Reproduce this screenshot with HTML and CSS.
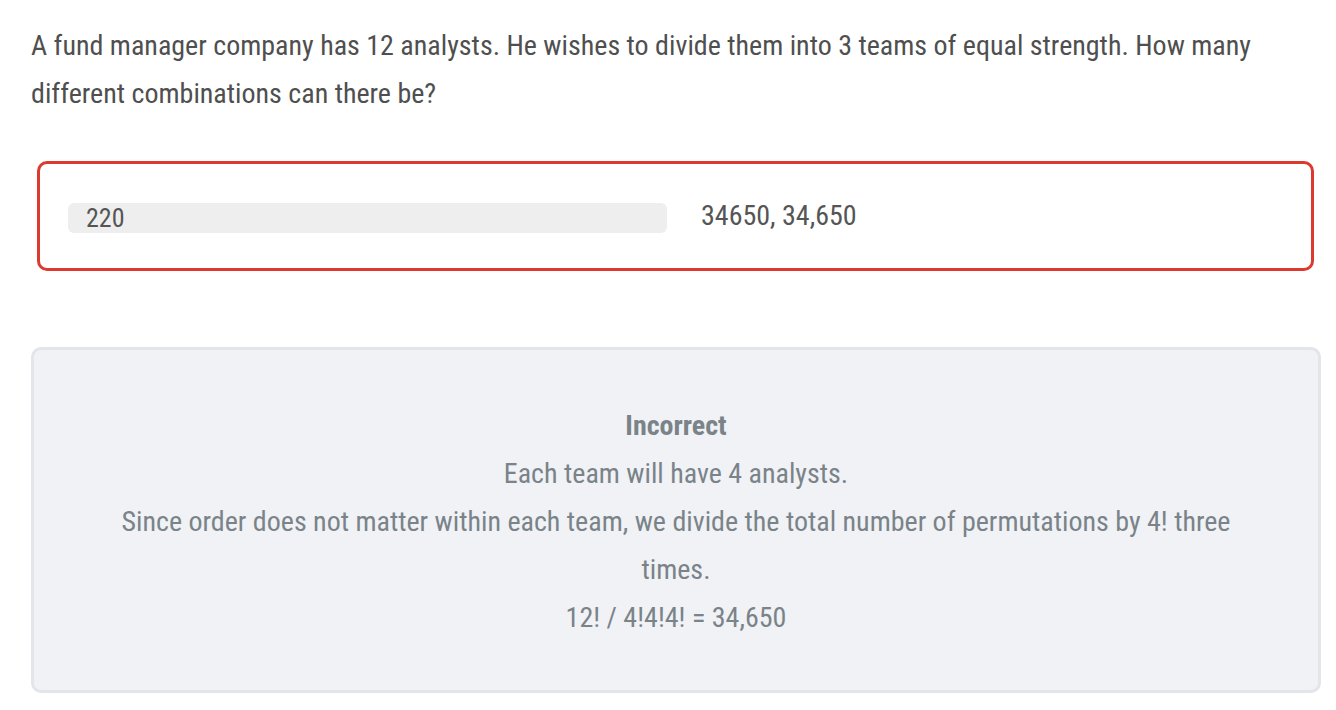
FILE: index.html
```html
<!DOCTYPE html>
<html>
<head>
<meta charset="utf-8">
<link rel="stylesheet" href="styles.css">
</head>
<body>
<div class="page">
  <p class="question">A fund manager company has 12 analysts. He wishes to divide them into 3 teams of equal strength. How many different combinations can there be?</p>
  <div class="answer-box">
    <div class="given">220</div>
    <div class="correct">34650, 34,650</div>
  </div>
  <div class="feedback">
    <div class="fb-title">Incorrect</div>
    <div>Each team will have 4 analysts.</div>
    <div>Since order does not matter within each team, we divide the total number of permutations by 4! three times.</div>
    <div>12! / 4!4!4! = 34,650</div>
  </div>
</div>
</body>
</html>
```
FILE: styles.css
```css
html, body {
  margin: 0;
  padding: 0;
  background: #ffffff;
}
body {
  font-family: "Roboto Condensed", Roboto, "Liberation Sans", sans-serif;
  font-stretch: condensed;
  font-size: 28px;
  color: #4f4f4f;
}
.page {
  padding: 22px 16px 0 31px;
  width: 1290px;
}
.question {
  margin: 0;
  line-height: 48px;
  width: 1240px;
}
.answer-box {
  margin: 43px 7px 0 6px;
  border: 3px solid #dc3a2e;
  border-radius: 10px;
  height: 110px;
  box-sizing: border-box;
  display: flex;
  align-items: center;
  padding: 4px 0 0 28px;
  gap: 34px;
}
.given {
  width: 581px;
  height: 30px;
  line-height: 30px;
  background: #eeeeee;
  border-radius: 6px;
  padding-left: 18px;
  color: #555555;
  font-size: 26px;
}
.correct {
  color: #555555;
  margin-top: -6px;
}
.feedback {
  margin-top: 76px;
  background: #f0f2f6;
  border: 3px solid #e2e5e9;
  border-radius: 10px;
  height: 346px;
  box-sizing: border-box;
  text-align: center;
  color: #7a8388;
  line-height: 48px;
  padding: 52px 80px 0;
}
.fb-title {
  font-weight: 700;
}
```
